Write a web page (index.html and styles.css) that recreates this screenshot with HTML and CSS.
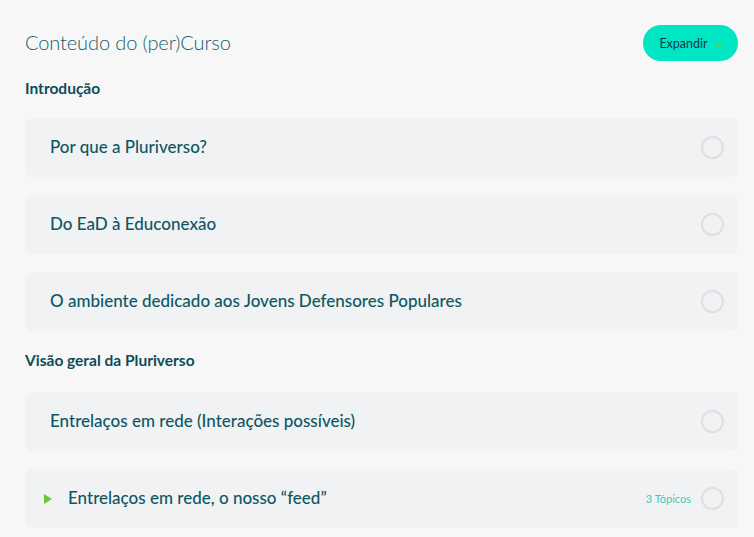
FILE: index.html
```html
<!DOCTYPE html>
<html lang="pt">
<head>
<meta charset="utf-8">
<link rel="stylesheet" href="styles.css">
</head>
<body>
<div class="page">
  <div class="header">
    <h2 class="title">Conteúdo do (per)Curso</h2>
    <button class="expand">Expandir <svg class="chev" width="9" height="6" viewBox="0 0 9 6"><path d="M1 1l3.5 3.5L8 1" fill="none" stroke="#7ccc3a" stroke-width="1.2"/></svg></button>
  </div>
  <div class="section">Introdução</div>
  <div class="row"><span class="label">Por que a Pluriverso?</span><span class="status"></span></div>
  <div class="row"><span class="label">Do EaD à Educonexão</span><span class="status"></span></div>
  <div class="row"><span class="label">O ambiente dedicado aos Jovens Defensores Populares</span><span class="status"></span></div>
  <div class="section section2">Visão geral da Pluriverso</div>
  <div class="row"><span class="label">Entrelaços em rede (Interações possíveis)</span><span class="status"></span></div>
  <div class="row row-exp"><span class="arrow"></span><span class="label">Entrelaços em rede, o nosso “feed”</span><span class="topics">3 Tópicos</span><span class="status"></span></div>
</div>
</body>
</html>
```
FILE: styles.css
```css
html, body { margin: 0; padding: 0; background: #f7f7f7; }
body { font-family: "Lato", "Noto Sans", sans-serif; color: #0f5963; }
.page { padding: 25px 16px 0 25px; }
.header { display: flex; justify-content: space-between; align-items: center; height: 36px; }
.title { margin: 0 0 2px; font-weight: 300; font-size: 20px; color: #135f6e; letter-spacing: -0.1px; }
.expand { border: none; background: #00e6c3; border-radius: 18px; height: 36px; width: 95px; padding: 0 0 0 1px; font-family: inherit; font-size: 12.5px; color: #14374a; display: flex; align-items: center; justify-content: center; gap: 6px; }
.chev { margin-top: 4px; }
.section { font-weight: 700; font-size: 15.5px; color: #0c4d58; margin: 17px 0 0; height: 20px; line-height: 20px; }
.section2 { margin-top: 19px; }
.row { margin-top: 18px; height: 59px; background: #f0f2f4; border-radius: 7px; display: flex; align-items: center; padding: 0 14px 0 25px; }
.section + .row { margin-top: 20px; }
.section2 + .row { margin-top: 22px; }
.label { font-size: 17px; font-weight: 500; color: #0d5763; flex: 1; padding-bottom: 2px; }
.status { width: 19px; height: 19px; border: 2px solid #dedfe1; border-radius: 50%; }
.topics { font-size: 11px; color: #3ec9c0; margin-right: 10px; }
.row-exp { padding-left: 19px; }
.arrow { width: 0; height: 0; border-left: 8px solid #6cc63a; border-top: 5px solid transparent; border-bottom: 5px solid transparent; margin-right: 16px; }
```
